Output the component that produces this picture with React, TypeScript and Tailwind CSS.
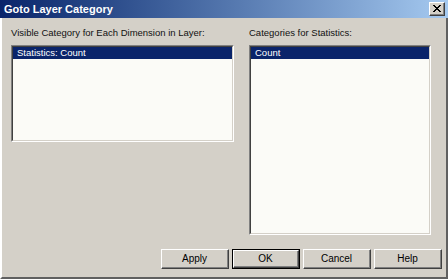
import React from "react";

const font = { fontFamily: '"Liberation Sans", Arial, sans-serif' };

function ListBox({ h, item, w }: { h: string; item: string; w: string }) {
  return (
    <div className={`${w} ${h} border border-t-[#808080] border-l-[#808080] border-b-white border-r-white`}>
      <div className="h-full w-full border border-t-[#404040] border-l-[#404040] border-b-[#d4d0c8] border-r-[#d4d0c8] bg-[#fbfbf7]">
        <div className="h-[12px] bg-[#0a246a] pl-[4px] text-[9.5px] leading-[12px] text-white">{item}</div>
      </div>
    </div>
  );
}

function Btn({ label, def }: { label: string; def?: boolean }) {
  const inner = (
    <div className="flex h-full w-full items-center justify-center border border-t-white border-l-white border-b-[#404040] border-r-[#404040] bg-[#d4d0c8]">
      <div className="flex h-full w-full items-center justify-center border-b border-r border-b-[#808080] border-r-[#808080] text-[10px] text-black">
        {label}
      </div>
    </div>
  );
  if (def) {
    return <div className="h-[20px] w-[68px] border border-black">{inner}</div>;
  }
  return <div className="h-[20px] w-[68px]">{inner}</div>;
}

export default function App() {
  return (
    <div className="flex h-[279px] w-[448px] flex-col bg-[#d4d0c8]" style={font}>
      <div className="flex h-[18px] items-center justify-between bg-gradient-to-r from-[#0a246a] to-[#a6caf0] pl-[4px] pr-[3px]">
        <span className="text-[11px] font-bold text-white">Goto Layer Category</span>
        <div className="h-[14px] w-[16px] border border-t-white border-l-white border-b-[#404040] border-r-[#404040] bg-[#d4d0c8]">
          <div className="flex h-full w-full items-center justify-center border-b border-r border-b-[#808080] border-r-[#808080]">
            <svg width="8" height="7" viewBox="0 0 8 7">
              <path d="M0 0 L7 7 M1 0 L8 7 M7 0 L0 7 M8 0 L1 7" stroke="black" strokeWidth="1" />
            </svg>
          </div>
        </div>
      </div>
      <div className="flex flex-1 flex-col border-l-2 border-r-2 border-b-2 border-l-white border-r-[#606060] border-b-[#606060]">
        <div className="flex gap-[15px] pl-[9px] pt-[9px]">
          <div className="flex w-[223px] flex-col">
            <div className="h-[12px] text-[9.5px] leading-[12px] text-[#111]">Visible Category for Each Dimension in Layer:</div>
            <div className="mt-[6px]">
              <ListBox w="w-[223px]" h="h-[97px]" item="Statistics: Count" />
            </div>
          </div>
          <div className="flex w-[182px] flex-col">
            <div className="h-[12px] text-[9.5px] leading-[12px] text-[#111]">Categories for Statistics:</div>
            <div className="mt-[6px]">
              <ListBox w="w-[182px]" h="h-[190px]" item="Count" />
            </div>
          </div>
        </div>
        <div className="mt-[14px] flex justify-end gap-[3px] pr-[4px]">
          <Btn label="Apply" />
          <Btn label="OK" def />
          <Btn label="Cancel" />
          <Btn label="Help" />
        </div>
      </div>
    </div>
  );
}
